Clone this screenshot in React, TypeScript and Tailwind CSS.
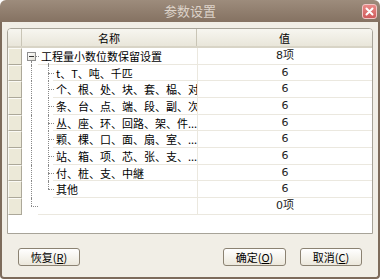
import React from "react";

const CJK = '"Noto Sans CJK SC", "Noto Sans", sans-serif';
const NUM = '"DejaVu Sans", "Noto Sans CJK SC", sans-serif';

type Row = { name: string; value: string; level: 0 | 1 | 2; last?: boolean };

const rows: Row[] = [
  { name: "工程量小数位数保留设置", value: "8项", level: 0 },
  { name: "t、T、吨、千匹", value: "6", level: 1 },
  { name: "个、根、处、块、套、榀、对", value: "6", level: 1 },
  { name: "条、台、点、端、段、副、次", value: "6", level: 1 },
  { name: "丛、座、环、回路、架、件...", value: "6", level: 1 },
  { name: "颗、棵、口、面、扇、室、...", value: "6", level: 1 },
  { name: "站、箱、项、芯、张、支、...", value: "6", level: 1 },
  { name: "付、桩、支、中継", value: "6", level: 1 },
  { name: "其他", value: "6", level: 1, last: true },
  { name: "", value: "0项", level: 2 },
];

function Indicator({ h }: { h: string }) {
  return (
    <div
      className={`w-[14px] shrink-0 ${h} border-t border-l border-t-[#fbfaf5] border-l-[#fbfaf5] border-r border-b border-r-[#aca899] border-b-[#aca899] bg-[#ece9d8]`}
    />
  );
}

function TreeLines({ index }: { index: number }) {
  const r = rows[index];
  return (
    <div className="absolute inset-0 pointer-events-none">
      {/* root vertical line at x=31 (relative 9) */}
      {index === 0 && (
        <div className="absolute left-[9px] top-[13px] bottom-0 border-l border-dotted border-[#8a8a8a]" />
      )}
      {index > 0 && index < 9 && (
        <div className="absolute left-[9px] top-0 bottom-0 border-l border-dotted border-[#8a8a8a]" />
      )}
      {index === 9 && (
        <>
          <div className="absolute left-[9px] top-0 h-[8px] border-l border-dotted border-[#8a8a8a]" />
          <div className="absolute left-[9px] top-[8px] w-[7px] border-t border-dotted border-[#8a8a8a]" />
        </>
      )}
      {/* root expander */}
      {index === 0 && (
        <>
          <div className="absolute left-[14px] top-[8px] w-[3px] border-t border-dotted border-[#8a8a8a]" />
          <div className="absolute left-[5px] top-[4px] w-[9px] h-[9px] border border-[#8f8f8f] bg-gradient-to-br from-white to-[#e2e0d6] flex items-center justify-center">
            <div className="w-[5px] h-px bg-[#333]" />
          </div>
        </>
      )}
      {/* child line at x=48 (relative 26) */}
      {r.level === 1 && (
        <>
          <div
            className={`absolute left-[26px] top-0 ${r.last ? "h-[8px]" : "bottom-0"} border-l border-dotted border-[#8a8a8a]`}
          />
          <div className="absolute left-[26px] top-[8px] w-[6px] border-t border-dotted border-[#8a8a8a]" />
        </>
      )}
      {index === 0 && (
        <div className="absolute left-[26px] top-[15px] bottom-0 border-l border-dotted border-[#8a8a8a]" />
      )}
    </div>
  );
}

function GridRow({ index }: { index: number }) {
  const r = rows[index];
  const indent = r.level === 0 ? "pl-[16px]" : r.level === 1 ? "pl-[31px]" : "pl-[16px]";
  return (
    <div className="flex h-[16.67px]">
      <Indicator h="h-[16.67px]" />
      <div className={`relative w-[175px] shrink-0 ${indent}`}>
        <TreeLines index={index} />
        <div
          className="h-full border-b border-[#ebe8df] pl-[3px] text-[11px] leading-[16px] text-black whitespace-nowrap overflow-hidden bg-white"
          style={{ fontFamily: CJK }}
        >
          {r.name}
        </div>
      </div>
      <div
        className="flex-1 h-full border-l border-b border-[#ebe8df] text-center text-[11px] leading-[16px] text-[#222]"
        style={{ fontFamily: NUM }}
      >
        {r.value}
      </div>
    </div>
  );
}

function Btn({ label, k, w }: { label: string; k: string; w: string }) {
  return (
    <button
      className={`${w} h-[18px] rounded-[3px] border border-[#8b8272] bg-gradient-to-b from-white to-[#ece8dc] text-[11px] leading-[16px] text-black flex items-center justify-center`}
      style={{ fontFamily: CJK }}
    >
      {label}(<span className="underline">{k}</span>)
    </button>
  );
}

export default function App() {
  return (
    <div className="w-[380px] h-[279px] flex flex-col bg-white">
      {/* title bar */}
      <div className="relative h-[22px] shrink-0 rounded-t-[6px] bg-gradient-to-b from-[#9d8c7c] to-[#857262] flex items-center justify-center">
        <span className="text-[13px] text-[#ddd3c9]" style={{ fontFamily: CJK }}>
          参数设置
        </span>
        <div className="absolute right-[3px] top-[4px] w-[15px] h-[15px] rounded-[3px] border border-[#f2c5c5] bg-gradient-to-b from-[#e88a88] to-[#cf5b5b] flex items-center justify-center">
          <svg width="9" height="9" viewBox="0 0 9 9">
            <path d="M1.5 1.5 L7.5 7.5 M7.5 1.5 L1.5 7.5" stroke="white" strokeWidth="2" strokeLinecap="round" />
          </svg>
        </div>
      </div>
      {/* body */}
      <div className="flex-1 flex flex-col bg-[#f1eee6] border-x-2 border-b-2 border-[#7d6b5b] rounded-b-[4px] px-[5px] pt-[6px]">
        <div className="h-[206px] flex flex-col border border-[#a7a398] bg-white rounded-tl-[4px] rounded-tr-[4px] overflow-hidden">
          {/* header */}
          <div className="flex h-[19px] shrink-0 bg-gradient-to-b from-[#f7f6f0] to-[#e9e6da] border-b-2 border-[#d8d4c6]">
            <div className="w-[14px] shrink-0 border-r border-[#c9c5b6]" />
            <div className="w-[175px] shrink-0 border-r border-[#c9c5b6] text-center text-[11px] leading-[18px]" style={{ fontFamily: CJK }}>
              名称
            </div>
            <div className="flex-1 text-center text-[11px] leading-[18px]" style={{ fontFamily: CJK }}>
              值
            </div>
          </div>
          {rows.map((_, i) => (
            <GridRow key={i} index={i} />
          ))}
          <div className="flex-1" />
        </div>
        <div className="flex items-center mt-[14px] px-[11px]">
          <Btn label="恢复" k="R" w="w-[62px]" />
          <div className="flex-1" />
          <Btn label="确定" k="O" w="w-[63px]" />
          <div className="w-[14px]" />
          <Btn label="取消" k="C" w="w-[62px]" />
        </div>
      </div>
    </div>
  );
}
